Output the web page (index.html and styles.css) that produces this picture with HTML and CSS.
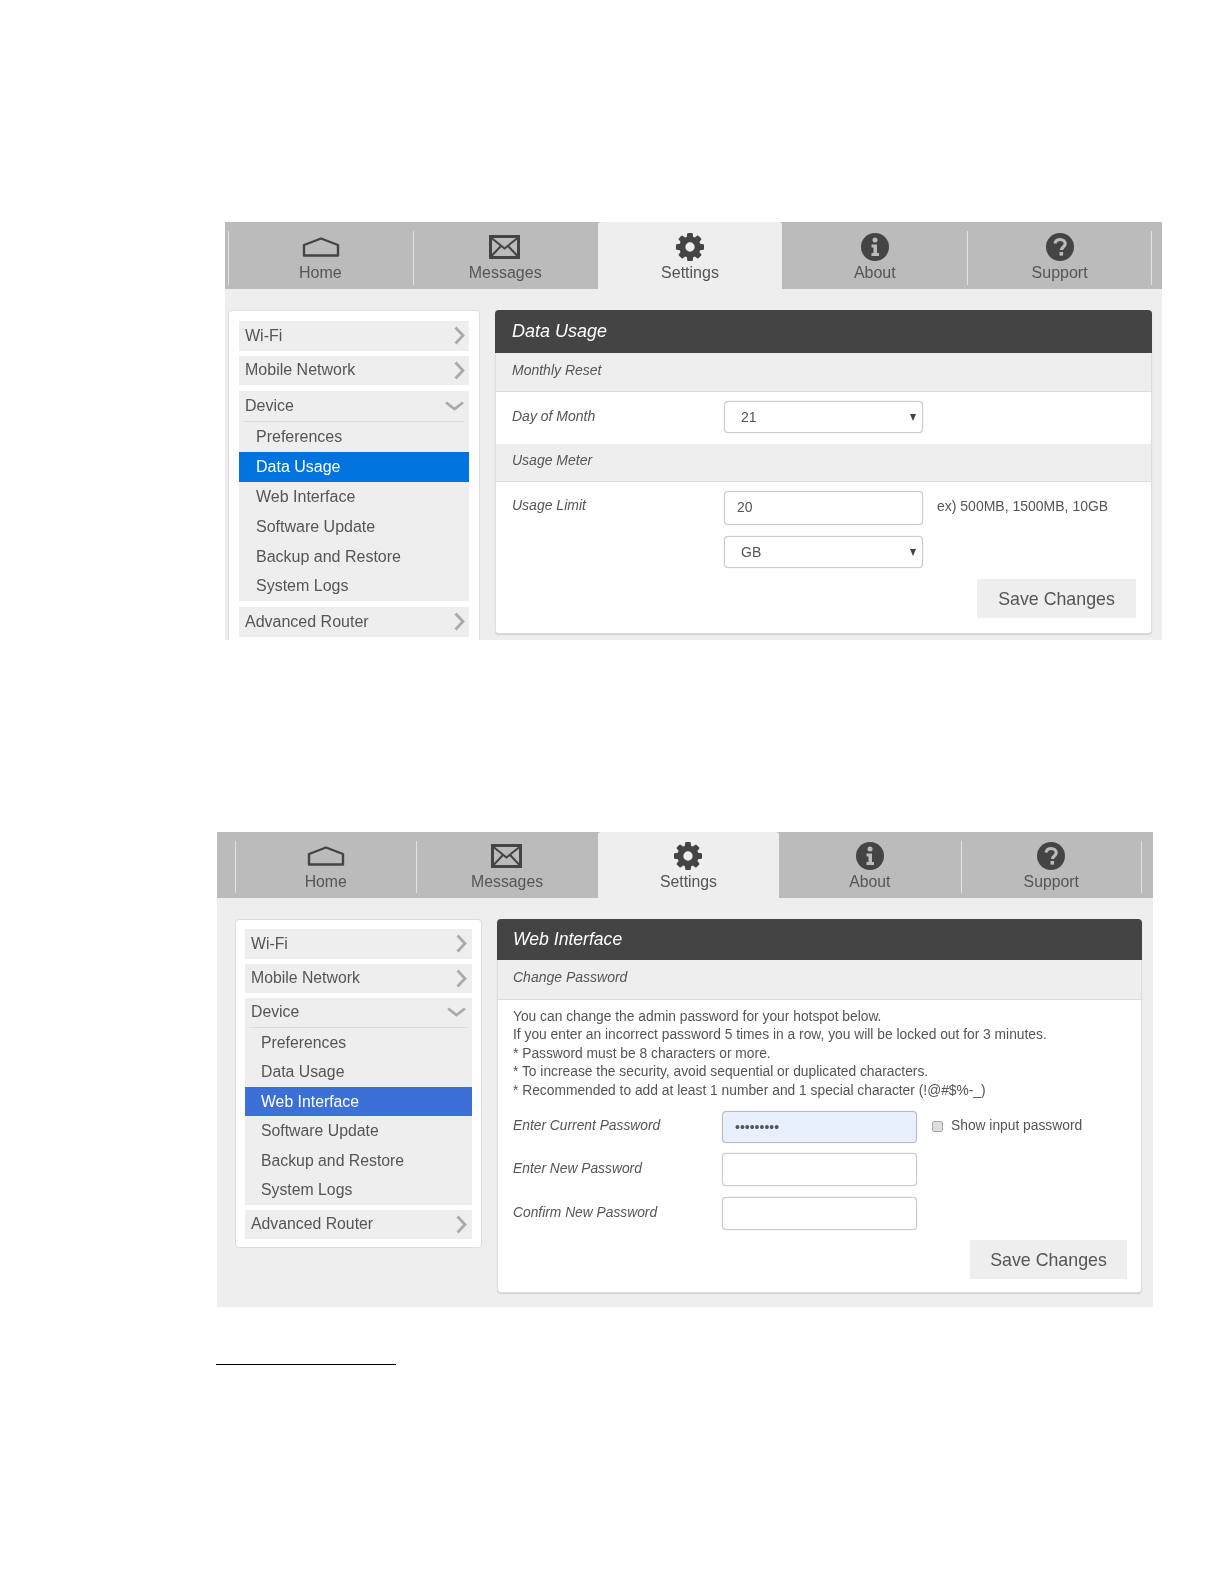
FILE: index.html
```html
<!DOCTYPE html>
<html lang="en">
<head>
<meta charset="utf-8">
<title>Hotspot settings</title>
<link rel="stylesheet" href="styles.css">
</head>
<body>
<svg class="defs" width="0" height="0" aria-hidden="true">
  <symbol id="i-home" viewBox="0 0 38 20"><path d="M2 18.500V8L19 1.500L36 8V18.500Z" fill="none" stroke="#444" stroke-width="2.400" stroke-linejoin="round"/></symbol>
  <symbol id="i-mail" viewBox="0 0 31 24"><rect x="1.500" y="1.500" width="28" height="21" fill="none" stroke="#444" stroke-width="3"/><path d="M2.500 3L15.500 13.500L28.500 3M2.500 21L12 11M28.500 21L19 11" fill="none" stroke="#444" stroke-width="2"/></symbol>
  <symbol id="i-gear" viewBox="0 -128 1536 1536"><path fill="#444" d="M1024 640q0-106-75-181t-181-75-181 75-75 181 75 181 181 75 181-75 75-181zm512-109v222q0 12-8 23t-20 13l-185 28q-19 54-39 91 35 50 107 138 10 12 10 25t-9 23q-27 37-99 108t-94 71q-12 0-26-9l-138-108q-44 23-91 38-16 136-29 186-7 28-36 28h-222q-14 0-24.500-8.500t-11.500-21.500l-28-184q-49-16-90-37l-141 107q-10 9-25 9-14 0-25-11-126-114-165-168-7-10-7-23 0-12 8-23 15-21 51-66.500t54-70.500q-27-50-41-99l-183-27q-13-2-21-12.500t-8-23.500v-222q0-12 8-23t19-13l186-28q14-46 39-92-40-57-107-138-10-12-10-24 0-10 9-23 26-36 98.500-107.500t94.500-71.500q13 0 26 10l138 107q44-23 91-38 16-136 29-186 7-28 36-28h222q14 0 24.500 8.500t11.500 21.500l28 184q49 16 90 37l142-107q9-9 24-9 13 0 25 10 129 119 165 170 7 8 7 22 0 12-8 23-15 21-51 66.500t-54 70.500q26 50 41 98l183 28q13 2 21 12.500t8 23.500z"/></symbol>
  <symbol id="i-info" viewBox="0 0 28 28"><circle cx="14" cy="14" r="14" fill="#444"/><circle cx="14" cy="7" r="2.500" fill="#bbb"/><path d="M10.500 11.500H16V20H18V23H10.500V20H12.500V14.500H10.500Z" fill="#bbb"/></symbol>
  <symbol id="i-help" viewBox="0 0 28 28"><circle cx="14" cy="14" r="14" fill="#444"/><path d="M9 10.500C9.500 7.800 11.500 6.500 14.200 6.500C17 6.500 19.200 8.200 19.200 10.700C19.200 14 15.500 14 15.500 17" fill="none" stroke="#bbb" stroke-width="3.200"/><rect x="13.500" y="19" width="3.600" height="3.600" fill="#bbb"/></symbol>
  <symbol id="i-right" viewBox="0 0 11 19"><path d="M1.500 1.500L9 9.500L1.500 17.500" fill="none" stroke="#aaa" stroke-width="2.800"/></symbol>
  <symbol id="i-down" viewBox="0 0 19 10"><path d="M1 1.500L9.500 8L18 1.500" fill="none" stroke="#aaa" stroke-width="2.800"/></symbol>
</svg>

<section class="shot shot-a">
  <nav class="tabs">
    <a class="tab sep"><span class="tab-icon"><svg class="ic-home"><use href="#i-home"/></svg></span><span class="tab-label">Home</span></a>
    <a class="tab sep"><span class="tab-icon"><svg class="ic-mail"><use href="#i-mail"/></svg></span><span class="tab-label">Messages</span></a>
    <a class="tab active"><span class="tab-icon"><svg class="ic-round"><use href="#i-gear"/></svg></span><span class="tab-label">Settings</span></a>
    <a class="tab"><span class="tab-icon"><svg class="ic-round"><use href="#i-info"/></svg></span><span class="tab-label">About</span></a>
    <a class="tab sep sep-end"><span class="tab-icon"><svg class="ic-round"><use href="#i-help"/></svg></span><span class="tab-label">Support</span></a>
  </nav>
  <div class="content">
    <aside class="side">
      <a class="item">Wi-Fi<svg class="chev-r"><use href="#i-right"/></svg></a>
      <a class="item">Mobile Network<svg class="chev-r"><use href="#i-right"/></svg></a>
      <div class="group">
        <a class="item open">Device<svg class="chev-d"><use href="#i-down"/></svg></a>
        <a class="sub">Preferences</a>
        <a class="sub current">Data Usage</a>
        <a class="sub">Web Interface</a>
        <a class="sub">Software Update</a>
        <a class="sub">Backup and Restore</a>
        <a class="sub">System Logs</a>
      </div>
      <a class="item">Advanced Router<svg class="chev-r"><use href="#i-right"/></svg></a>
    </aside>
    <main class="panel">
      <h2 class="panel-title">Data Usage</h2>
      <h3 class="panel-sub">Monthly Reset</h3>
      <div class="panel-body body-reset">
        <div class="row">
          <label class="lbl">Day of Month</label>
          <span class="select"><select class="control"><option>21</option></select></span>
        </div>
      </div>
      <h3 class="panel-sub sub-meter">Usage Meter</h3>
      <div class="panel-body body-meter">
        <div class="row">
          <label class="lbl">Usage Limit</label>
          <input class="control text tall" type="text" value="20">
          <span class="note">ex) 500MB, 1500MB, 10GB</span>
        </div>
        <div class="row">
          <span class="lbl"></span>
          <span class="select"><select class="control"><option>GB</option></select></span>
        </div>
        <div class="actions"><button class="save" type="button">Save Changes</button></div>
      </div>
    </main>
  </div>
</section>

<section class="shot shot-b">
  <nav class="tabs">
    <a class="tab sep"><span class="tab-icon"><svg class="ic-home"><use href="#i-home"/></svg></span><span class="tab-label">Home</span></a>
    <a class="tab sep"><span class="tab-icon"><svg class="ic-mail"><use href="#i-mail"/></svg></span><span class="tab-label">Messages</span></a>
    <a class="tab active"><span class="tab-icon"><svg class="ic-round"><use href="#i-gear"/></svg></span><span class="tab-label">Settings</span></a>
    <a class="tab"><span class="tab-icon"><svg class="ic-round"><use href="#i-info"/></svg></span><span class="tab-label">About</span></a>
    <a class="tab sep sep-end"><span class="tab-icon"><svg class="ic-round"><use href="#i-help"/></svg></span><span class="tab-label">Support</span></a>
  </nav>
  <div class="content">
    <aside class="side">
      <a class="item">Wi-Fi<svg class="chev-r"><use href="#i-right"/></svg></a>
      <a class="item">Mobile Network<svg class="chev-r"><use href="#i-right"/></svg></a>
      <div class="group">
        <a class="item open">Device<svg class="chev-d"><use href="#i-down"/></svg></a>
        <a class="sub">Preferences</a>
        <a class="sub">Data Usage</a>
        <a class="sub current">Web Interface</a>
        <a class="sub">Software Update</a>
        <a class="sub">Backup and Restore</a>
        <a class="sub">System Logs</a>
      </div>
      <a class="item">Advanced Router<svg class="chev-r"><use href="#i-right"/></svg></a>
    </aside>
    <main class="panel">
      <h2 class="panel-title">Web Interface</h2>
      <h3 class="panel-sub">Change Password</h3>
      <div class="panel-body body-pass">
        <p class="intro">You can change the admin password for your hotspot below.<br>If you enter an incorrect password 5 times in a row, you will be locked out for 3 minutes.<br>* Password must be 8 characters or more.<br>* To increase the security, avoid sequential or duplicated characters.<br>* Recommended to add at least 1 number and 1 special character (!@#$%-_)</p>
        <div class="row">
          <label class="lbl">Enter Current Password</label>
          <input class="control text filled" type="password" value="123456789">
          <label class="show"><input class="check" type="checkbox">Show input password</label>
        </div>
        <div class="row">
          <label class="lbl">Enter New Password</label>
          <input class="control text tall" type="password">
        </div>
        <div class="row">
          <label class="lbl">Confirm New Password</label>
          <input class="control text tall" type="password">
        </div>
        <div class="actions"><button class="save" type="button">Save Changes</button></div>
      </div>
    </main>
  </div>
</section>

<div class="footnote-rule"></div>
</body>
</html>
```

FILE: styles.css
```css
* { box-sizing: border-box; }
html, body { margin: 0; padding: 0; }
body {
  background: #fff;
  height: 1584px;
  overflow: hidden;
  font-family: "Liberation Sans", Arial, sans-serif;
  color: #555;
}
.defs { position: absolute; }

.shot { background: #eee; overflow: hidden; filter: blur(.35px); }
.shot-a { margin: 222px 0 0 225px; width: 937px; height: 418px; }
.shot-b { margin: 192px 0 0 217px; width: 936px; height: 475px; }

/* tabs */
.tabs { display: flex; background: #bbb; }
.shot-a .tabs { height: 67px; padding-left: 3px; }
.shot-b .tabs { height: 66px; padding-left: 18px; }
.tab {
  position: relative;
  display: flex;
  flex-direction: column;
  align-items: center;
}
.shot-a .tab { width: 184.8px; font-size: 16px; padding-top: 12px; }
.shot-b .tab { width: 181.4px; font-size: 15.8px; padding-top: 11px; }
.tab.active { background: #eee; border-radius: 3px 3px 0 0; }
.tab.sep::before, .tab.sep-end::after {
  content: "";
  position: absolute;
  top: 9px;
  width: 1px;
  height: 54px;
  background: #e2e2e2;
}
.shot-b .tab.sep::before, .shot-b .tab.sep-end::after { height: 52px; }
.tab.sep::before { left: 0; }
.tab.sep-end::after { right: 0; }
.tab-icon { height: 26px; display: flex; align-items: center; justify-content: center; }
.tab-label { margin-top: 3px; line-height: 19px; color: #555; }
.ic-home { width: 38px; height: 20px; margin-left: 1px; }
.ic-mail { width: 31px; height: 24px; margin-right: 2px; }
.ic-round { width: 28px; height: 28px; }

/* content */
.content { display: flex; align-items: flex-start; column-gap: 15px; }
.shot-a .content { padding: 21px 0 0 3px; }
.shot-b .content { padding: 21px 0 0 18px; }

.side {
  background: #fff;
  border: 1px solid #ddd;
  border-radius: 4px;
  display: flex;
  flex-direction: column;
  row-gap: 5px;
}
.shot-a .side { width: 252px; padding: 10px 10px 10px 10px; }
.shot-b .side { width: 247px; padding: 9px 9px 8px 9px; }
.item {
  display: flex;
  align-items: center;
  justify-content: space-between;
  background: #eee;
  padding: 0 4px 0 6px;
  height: 29.500px;
  font-size: 16px;
}
.shot-b .item { font-size: 15.8px; padding-right: 5px; }
.chev-r { width: 11px; height: 19px; }
.chev-d { width: 19px; height: 10px; margin-right: 1px; }
.item.open { position: relative; height: 30.500px; padding-bottom: 1px; }
.item.open::after {
  content: "";
  position: absolute;
  left: 4px;
  right: 5px;
  bottom: 0;
  height: 1px;
  background: #ddd;
}
.shot-b .item.open { height: 29.500px; }
.group { background: #eee; }
.shot-a .group { margin-top: 1px; }
.shot-a .group + .item { height: 30px; margin-top: 1px; }
.sub { display: block; padding-left: 17px; height: 30px; line-height: 30px; font-size: 16px; }
.shot-a .sub:last-child { height: 29px; line-height: 28px; }
.shot-b .sub { font-size: 15.8px; padding-left: 16px; height: 29.500px; line-height: 29.500px; }
.sub.current { color: #fff; }
.shot-a .sub.current { background: #0073de; }
.shot-b .sub.current { background: #3c6fd8; }

/* panel */
.panel {
  flex: none;
  background: #fff;
  border: 1px solid #ddd;
  border-top: 0;
  border-radius: 4px;
  box-shadow: 0 1px 1px rgba(0, 0, 0, .12);
}
.shot-a .panel { width: 657px; }
.shot-b .panel { width: 645px; }
.panel-title {
  margin: 0 -1px;
  background: #444;
  color: #fff;
  font-size: 18px;
  font-style: italic;
  font-weight: 400;
  padding-left: 17px;
  height: 43px;
  line-height: 42px;
  border-radius: 4px 4px 0 0;
}
.shot-b .panel-title { height: 41px; line-height: 41px; font-size: 17.600px; padding-left: 16px; }
.panel-sub {
  margin: 0;
  background: #eee;
  border-bottom: 1px solid #ddd;
  font-size: 14px;
  font-style: italic;
  font-weight: 400;
  padding-left: 16px;
  height: 39px;
  line-height: 34px;
}
.shot-b .panel-sub { height: 40px; padding-left: 15px; line-height: 35px; }
.sub-meter { height: 38px; line-height: 33px; }
.panel-body { padding-left: 16px; padding-right: 15px; }
.shot-b .panel-body { padding-left: 15px; padding-right: 14px; }
.body-reset { height: 52px; padding-top: 9px; }
.body-meter { padding-top: 9px; padding-bottom: 15px; }
.body-pass { padding-top: 8px; padding-bottom: 13px; }

.row { display: flex; align-items: center; margin-bottom: 11px; font-size: 14px; }
.lbl { font-style: italic; flex: none; margin-top: -2px; }
.body-meter .lbl { margin-top: -6px; }
.shot-a .lbl { width: 212px; }
.shot-b .lbl { width: 209px; }
.body-pass .row { font-size: 13.8px; }
.body-pass .lbl { margin-top: -3px; }
.control {
  display: block;
  font: 14px "Liberation Sans", Arial, sans-serif;
  color: #555;
  background: #fff;
  border: 1px solid #ccc;
  border-radius: 4px;
  box-shadow: 0 0 1px #bbb;
}
.shot-a .control { width: 199px; }
.shot-b .control { width: 195px; }
select.control { appearance: none; height: 32px; padding: 0 0 0 16px; }
.select { position: relative; display: block; }
.select::after {
  content: "";
  position: absolute;
  right: 7px;
  top: 13px;
  border: 3.500px solid transparent;
  border-top: 7px solid #444;
  border-bottom: 0;
}
.text { height: 32px; padding: 0 12px; }
.body-meter .text { padding-bottom: 3px; }
.tall { height: 33px; }
.shot-a .tall { height: 34px; }
.filled { background: #e8f0fe; border-color: #bbb; }
.note { margin-left: 14px; margin-top: -5px; }
.show { display: flex; align-items: center; margin-left: 15px; margin-top: -3px; }
.check {
  appearance: none;
  width: 11px;
  height: 11px;
  margin: 2px 8px 0 0;
  background: #ddd;
  border: 1px solid #aaa;
  border-radius: 2px;
}

.intro { margin: 0 0 11px; font-size: 13.8px; line-height: 18.400px; }
.body-pass .row { margin-bottom: 10px; }
.body-pass .row:nth-of-type(2) { margin-bottom: 11px; }
.body-pass .row:last-of-type { margin-bottom: 9px; }

.actions { display: flex; justify-content: flex-end; }
.save {
  background: #eee;
  border: 0;
  color: #555;
  font: 17.800px "Liberation Sans", Arial, sans-serif;
  height: 39px;
  padding: 2px 0 0;
}
.shot-a .save { width: 159px; }
.shot-b .save { width: 157px; }

.footnote-rule { margin: 57px 0 0 216px; width: 180px; height: 1px; background: #000; }
```
